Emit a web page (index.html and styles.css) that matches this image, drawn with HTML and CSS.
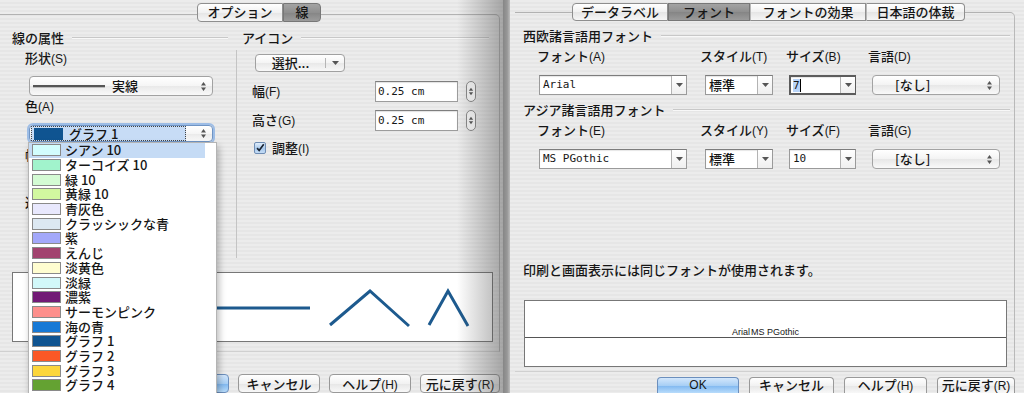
FILE: index.html
```html
<!DOCTYPE html>
<html lang="ja">
<head>
  <meta charset="UTF-8" />
  <meta name="viewport" content="width=device-width, initial-scale=1.0" />
  <title>線 / フォント</title>
  <link rel="stylesheet" href="styles.css">
</head>
<body>
  <svg class="sprite" aria-hidden="true">
    <symbol id="ud" viewBox="0 0 7 11"><path d="M1 4.5 3.5 1 6 4.5zM1 6.5 3.5 10 6 6.5z"/></symbol>
    <symbol id="dn" viewBox="0 0 7 4"><path d="M0 0h7L3.5 4z"/></symbol>
  </svg>

  <div class="screen">
    <!-- line properties dialog -->
    <section class="panel panel-line">
      <div class="frame">
        <div class="tabs">
          <span class="tab tab-opt">オプション</span><span class="tab tab-line active">線</span>
        </div>

        <div class="cols">
          <div class="col-attr">
            <div class="group-title">線の属性</div>
            <div class="label">形状<span class="key">(S)</span></div>
            <div class="popup shape-popup">
              <span class="line-sample"></span>
              <span class="popup-text">実線</span>
              <svg class="updown"><use href="#ud"/></svg>
            </div>
            <div class="label label-color">色<span class="key">(A)</span></div>
            <div class="color-field">
              <div class="popup color-popup">
                <span class="color-sel"><span class="swatch c-graph1"></span>グラフ 1</span>
                <svg class="updown"><use href="#ud"/></svg>
              </div>
              <ul class="color-list">
                <li class="hl"><span class="swatch c-cyan"></span>シアン 10</li>
                <li><span class="swatch c-turq"></span>ターコイズ 10</li>
                <li><span class="swatch c-green"></span>緑 10</li>
                <li><span class="swatch c-ygreen"></span>黄緑 10</li>
                <li><span class="swatch c-bgray"></span>青灰色</li>
                <li><span class="swatch c-classic"></span>クラッシックな青</li>
                <li><span class="swatch c-purple"></span>紫</li>
                <li><span class="swatch c-bordeaux"></span>えんじ</li>
                <li><span class="swatch c-pyellow"></span>淡黄色</li>
                <li><span class="swatch c-pgreen"></span>淡緑</li>
                <li><span class="swatch c-dpurple"></span>濃紫</li>
                <li><span class="swatch c-salmon"></span>サーモンピンク</li>
                <li><span class="swatch c-sea"></span>海の青</li>
                <li><span class="swatch c-graph1"></span>グラフ 1</li>
                <li><span class="swatch c-graph2"></span>グラフ 2</li>
                <li><span class="swatch c-graph3"></span>グラフ 3</li>
                <li><span class="swatch c-graph4"></span>グラフ 4</li>
              </ul>
            </div>
            <div class="label label-width">幅<span class="key">(W)</span></div>
            <div class="label label-trans">透過性<span class="key">(T)</span></div>
          </div>

          <div class="col-icon">
            <div class="group-title">アイコン</div>
            <div class="icon-body">
              <div class="select-btn">
                <span class="select-text">選択...</span>
                <span class="select-arrow"><svg class="dn"><use href="#dn"/></svg></span>
              </div>
              <div class="num-row">
                <span class="num-label">幅<span class="key">(F)</span></span>
                <span class="num-input">0.25 cm</span>
                <span class="stepper"><svg class="updown"><use href="#ud"/></svg></span>
              </div>
              <div class="num-row">
                <span class="num-label">高さ<span class="key">(G)</span></span>
                <span class="num-input">0.25 cm</span>
                <span class="stepper"><svg class="updown"><use href="#ud"/></svg></span>
              </div>
              <div class="check-row">
                <svg class="checkbox" viewBox="0 0 12 12">
                  <path d="M2.5 6.2 5 9 10.5 1.5" />
                </svg>
                <span>調整<span class="key">(I)</span></span>
              </div>
            </div>
          </div>
        </div>

        <div class="preview line-preview">
          <svg viewBox="0 0 479 68" width="479" height="68">
            <path d="M20 35H297M317 52 357 18 396 53M416 52 435 18 455 53" />
          </svg>
        </div>
      </div>

      <div class="buttons">
        <span class="btn btn-ok">OK</span>
        <span class="btn">キャンセル</span>
        <span class="btn">ヘルプ<span class="key">(H)</span></span>
        <span class="btn btn-revert">元に戻す<span class="key">(R)</span></span>
      </div>
    </section>

    <div class="divider"></div>

    <!-- character dialog, font tab -->
    <section class="panel panel-font">
      <div class="frame">
        <div class="tabs">
          <span class="tab tab-label">データラベル</span><span class="tab tab-font active">フォント</span><span class="tab tab-effect">フォントの効果</span><span class="tab tab-asian">日本語の体裁</span>
        </div>

        <div class="font-section">
          <div class="group-title">西欧諸言語用フォント</div>
          <div class="font-grid">
            <span>フォント<span class="key">(A)</span></span>
            <span>スタイル<span class="key">(T)</span></span>
            <span>サイズ<span class="key">(B)</span></span>
            <span>言語<span class="key">(D)</span></span>
            <span class="combo combo-name"><span class="combo-text mono">Arial</span><span class="combo-arrow"><svg class="dn"><use href="#dn"/></svg></span></span>
            <span class="combo combo-style"><span class="combo-text">標準</span><span class="combo-arrow"><svg class="dn"><use href="#dn"/></svg></span></span>
            <span class="combo combo-size focused"><span class="combo-text mono"><span class="picked">7</span><span class="caret"></span></span><span class="combo-arrow"><svg class="dn"><use href="#dn"/></svg></span></span>
            <span class="lang-popup"><span class="lang-text">[なし]</span><svg class="updown"><use href="#ud"/></svg></span>
          </div>
        </div>

        <div class="font-section">
          <div class="group-title">アジア諸言語用フォント</div>
          <div class="font-grid">
            <span>フォント<span class="key">(E)</span></span>
            <span>スタイル<span class="key">(Y)</span></span>
            <span>サイズ<span class="key">(F)</span></span>
            <span>言語<span class="key">(G)</span></span>
            <span class="combo combo-name"><span class="combo-text mono">MS PGothic</span><span class="combo-arrow"><svg class="dn"><use href="#dn"/></svg></span></span>
            <span class="combo combo-style"><span class="combo-text">標準</span><span class="combo-arrow"><svg class="dn"><use href="#dn"/></svg></span></span>
            <span class="combo combo-size"><span class="combo-text mono">10</span><span class="combo-arrow"><svg class="dn"><use href="#dn"/></svg></span></span>
            <span class="lang-popup"><span class="lang-text">[なし]</span><svg class="updown"><use href="#ud"/></svg></span>
          </div>
        </div>

        <div class="note">印刷と画面表示には同じフォントが使用されます。</div>

        <div class="preview font-preview">
          <div class="sample-line"><span>Arial</span><span>MS PGothic</span></div>
        </div>
      </div>

      <div class="buttons">
        <span class="btn btn-ok">OK</span>
        <span class="btn btn-cancel">キャンセル</span>
        <span class="btn btn-help">ヘルプ<span class="key">(H)</span></span>
        <span class="btn btn-revert">元に戻す<span class="key">(R)</span></span>
      </div>
    </section>
  </div>
</body>
</html>
```

FILE: styles.css
```css
* {
  box-sizing: border-box;
}

html,
body {
  margin: 0;
}

body {
  width: 1024px;
  height: 393px;
  overflow: hidden;
  font-family: "Noto Sans CJK JP", "Liberation Sans", sans-serif;
  font-size: 13px;
  font-weight: 500;
  line-height: 16px;
  color: #161616;
  background: #e8e8e8;
}

.sprite {
  position: absolute;
  width: 0;
  height: 0;
}

.key {
  font-family: "Liberation Sans", sans-serif;
  font-size: 12px;
  font-weight: 400;
}

.mono {
  font-family: "DejaVu Sans Mono", "Noto Sans CJK JP", monospace;
  font-size: 11px;
  font-weight: 400;
}

.screen {
  display: flex;
  height: 393px;
}

.panel {
  position: relative;
  height: 393px;
  background: repeating-linear-gradient(#ececec 0 2px, #e6e6e6 2px 4px);
}

.panel-line {
  width: 503px;
}

.panel-font {
  width: 514px;
}

/* shadow of the front window falling on the back one */
.panel-line::after {
  content: "";
  position: absolute;
  top: 0;
  right: 0;
  bottom: 0;
  width: 46px;
  background: linear-gradient(to right, rgba(70, 70, 70, 0), rgba(70, 70, 70, 0.42));
  pointer-events: none;
}

.divider {
  width: 7px;
  background: linear-gradient(to right, #868686, #979797 60%, #bdbdbd);
}

/* tab frame */
.frame {
  border-top: 1px solid #b2b2b2;
  border-right: 1px solid #b9b9b9;
  border-bottom: 1px solid #d0d0d0;
  border-top-right-radius: 5px;
}

.panel-line .frame {
  margin: 14px 3px 0 0;
  padding-bottom: 9px;
}

.panel-font .frame {
  margin: 12px 9px 0 5px;
  padding: 0 4px 4px 8px;
}

.tabs {
  display: flex;
}

.panel-line .tabs {
  height: 19px;
  margin: -12px 0 0 197px;
}

.panel-font .tabs {
  height: 18px;
  margin: -10px 0 0 49px;
}

.tab {
  height: 100%;
  line-height: 16px;
  text-align: center;
  border: 1px solid #8e8e8e;
  border-left: 1px solid #b8b8b8;
  background: linear-gradient(#ffffff, #f1f1f1 50%, #e5e5e5 51%, #f6f6f6);
}

.tab:first-child {
  border-left-color: #8e8e8e;
  border-radius: 4px 0 0 4px;
}

.tab:last-child {
  border-radius: 0 4px 4px 0;
}

.tab.active {
  background: linear-gradient(#a3a3a3, #8f8f8f 50%, #858585 51%, #9b9b9b);
  border-color: #777;
}

.tab-opt { width: 86px; }
.tab-line { width: 38px; }
.tab-label { width: 96px; }
.tab-font { width: 82px; }
.tab-effect { width: 116px; }
.tab-asian { width: 99px; }

.group-title {
  display: flex;
  align-items: center;
  height: 16px;
}

.group-title::after {
  content: "";
  flex: 1;
  margin-left: 8px;
  border-top: 1px solid #c8c8c8;
  border-bottom: 1px solid #f8f8f8;
}

/* line tab */
.cols {
  display: grid;
  grid-template-columns: 224px 1fr;
  margin: 8px 0 0 12px;
  height: 228px;
}

.col-attr {
  padding-right: 8px;
}

.label {
  height: 16px;
  padding-left: 13px;
  margin-top: 4px;
}

.label-color {
  margin-top: 2px;
}

.label-width {
  margin-top: 5px;
}

.label-trans {
  margin-top: 31px;
}

.popup {
  display: flex;
  align-items: center;
  width: 184px;
  margin-left: 17px;
  border: 1px solid #a2a2a2;
  border-radius: 4px;
  background: linear-gradient(#ffffff, #f5f5f5 50%, #e9e9e9 51%, #f9f9f9);
}

.shape-popup {
  height: 20px;
  margin-top: 10px;
}

.line-sample {
  width: 72px;
  height: 2px;
  margin: 0 0 1px 3px;
  background: #555;
  box-shadow: 0 1px 0 #bbb;
}

.popup-text {
  margin-left: 7px;
}

.updown {
  width: 7px;
  height: 11px;
  fill: #555;
}

.popup .updown {
  margin: 0 5px 0 auto;
}

.color-field {
  position: relative;
  width: 184px;
  margin: 11px 0 0 17px;
}

.color-popup {
  height: 17px;
  margin-left: 0;
  border-color: #6f94c4;
  box-shadow: 0 0 0 2px #9dbde6;
}

.color-sel {
  display: flex;
  align-items: center;
  width: 155px;
  height: 15px;
  margin-left: 1px;
  border: 1px dotted #444;
  background: #c7dcf6;
}

.color-sel .swatch {
  margin: 0 6px 0 2px;
}

.swatch {
  width: 29px;
  height: 12px;
  border: 1px solid #8a8a8a;
  flex: none;
}

.color-sel .swatch {
  border: none;
}

/* the open colour list lies over the dialog */
.color-list {
  position: absolute;
  top: 17px;
  left: -1px;
  width: 189px;
  height: 260px;
  margin: 0;
  padding: 0 11px 0 0;
  list-style: none;
  background: #fff;
  border: 1px solid #b4b4b4;
  box-shadow: 2px 4px 7px rgba(0, 0, 0, 0.28);
  z-index: 2;
}

.color-list li {
  display: flex;
  align-items: center;
  height: 14.7px;
  padding-left: 3px;
  line-height: 14px;
  white-space: nowrap;
}

.color-list li .swatch {
  margin-right: 4px;
}

.color-list li.hl {
  background: #c5dbf5;
}

.c-cyan { background: #d2fdfd; }
.c-turq { background: #a1f3cc; }
.c-green { background: #d4fbd4; }
.c-ygreen { background: #d2f8a0; }
.c-bgray { background: #e8e8fd; }
.c-classic { background: #dce8f2; }
.c-purple { background: #a3a8fa; }
.c-bordeaux { background: #a2436f; }
.c-pyellow { background: #fffdd0; }
.c-pgreen { background: #d2f8f9; }
.c-dpurple { background: #721a76; }
.c-salmon { background: #fd8f8c; }
.c-sea { background: #1679d6; }
.c-graph1 { background: #0f5491; }
.c-graph2 { background: #fb5826; }
.c-graph3 { background: #fcd63c; }
.c-graph4 { background: #64a232; }

.col-icon .group-title {
  padding: 0 10px 0 6px;
}

.icon-body {
  height: 208px;
  margin-top: 4px;
  padding-top: 4px;
  border-left: 1px solid #c4c4c4;
}

.select-btn {
  display: flex;
  width: 90px;
  height: 18px;
  margin-left: 18px;
  border: 1px solid #a0a0a0;
  border-radius: 4px;
  background: linear-gradient(#ffffff, #f4f4f4 50%, #e8e8e8 51%, #f8f8f8);
}

.select-text {
  width: 69px;
  line-height: 16px;
  text-align: center;
}

.select-arrow {
  display: flex;
  align-items: center;
  justify-content: center;
  flex: 1;
  margin: 3px 0;
  border-left: 1px solid #b5b5b5;
}

.dn {
  width: 7px;
  height: 4px;
  fill: #555;
}

.num-row {
  display: flex;
  align-items: center;
  margin-top: 9px;
  padding-left: 15px;
}

.num-row + .num-row {
  margin-top: 8px;
}

.num-label {
  width: 123px;
}

.num-input {
  width: 83px;
  height: 21px;
  padding-left: 2px;
  font-family: "DejaVu Sans Mono", monospace;
  font-size: 11px;
  font-weight: 400;
  line-height: 19px;
  background: #fff;
  border: 1px solid #9c9c9c;
  border-top-color: #7e7e7e;
  box-shadow: inset 0 1px 1px rgba(0, 0, 0, 0.12);
}

.stepper {
  display: flex;
  align-items: center;
  justify-content: center;
  width: 10px;
  height: 21px;
  margin-left: 8px;
  border: 1px solid #8a8a8a;
  border-radius: 5px;
  background: linear-gradient(to right, #f4f4f4, #ffffff);
}

.stepper .updown {
  width: 6px;
}

.check-row {
  display: flex;
  align-items: center;
  gap: 6px;
  height: 16px;
  margin-top: 9px;
  padding-left: 17px;
}

.checkbox {
  width: 12px;
  height: 12px;
  border: 1px solid #6f8db4;
  border-radius: 2px;
  background: linear-gradient(#e0eefc, #a9c9ec 55%, #c4dcf6);
  fill: none;
  stroke: #1a2330;
  stroke-width: 2;
  overflow: visible;
}

.preview {
  background: #fff;
  border: 1px solid #777;
}

.line-preview {
  width: 481px;
  height: 70px;
  margin: 14px 0 0 12px;
}

.line-preview svg {
  display: block;
  fill: none;
  stroke: #1d5a8e;
  stroke-width: 3;
}

/* buttons */
.buttons {
  display: flex;
  justify-content: flex-end;
  gap: 9px;
}

.panel-line .buttons {
  margin: 22px 3px 0 0;
}

.panel-font .buttons {
  margin: 5px 9px 0 0;
  gap: 10px;
}

.btn {
  width: 82px;
  height: 19px;
  line-height: 17px;
  text-align: center;
  border: 1px solid #999;
  border-radius: 4px;
  background: linear-gradient(#ffffff, #f2f2f2 50%, #e6e6e6 51%, #f8f8f8);
}

.panel-font .btn {
  height: 16px;
  line-height: 14px;
  border-bottom: none;
  border-radius: 4px 4px 0 0;
}

.btn-ok {
  font-family: "Liberation Sans", sans-serif;
  font-size: 12px;
  border-color: #6c8fbd;
  background: linear-gradient(#d3e7fc, #a8cff5 50%, #7fb7f0 51%, #b8dcfb);
}

.panel-line .btn-revert {
  width: 80px;
}

.btn-cancel { width: 85px; }
.btn-help { width: 83px; }
.panel-font .btn-revert { width: 78px; }

/* font tab */
.font-section .group-title {
  margin-top: 7px;
}

.font-grid {
  display: grid;
  grid-template-columns: 163px 86px 82px 1fr;
  grid-template-rows: 16px 20px;
  row-gap: 11px;
  margin: 4px 0 0 14px;
}

.combo {
  display: flex;
  height: 20px;
  background: #fff;
  border: 1px solid #9a9a9a;
  border-top-color: #7d7d7d;
  box-shadow: inset 0 1px 1px rgba(0, 0, 0, 0.1);
}

.combo-name { width: 148px; margin-left: 2px; }
.combo-style { width: 68px; margin-left: 5px; }
.combo-size { width: 67px; margin-left: 3px; }

.combo-text {
  flex: 1;
  padding-left: 3px;
  line-height: 18px;
  overflow: hidden;
  white-space: nowrap;
}

.combo-arrow {
  display: flex;
  align-items: center;
  justify-content: center;
  width: 15px;
  border-left: 1px solid #b3b3b3;
  background: linear-gradient(#ffffff, #efefef);
}

.combo.focused {
  border: 2px solid #5c5c5c;
  border-right-width: 1px;
}

.combo.focused .combo-text {
  display: flex;
  align-items: center;
  padding-left: 2px;
}

.picked {
  background: #b8d4f8;
  line-height: 13px;
}

.caret {
  width: 1px;
  height: 13px;
  background: #000;
}

.lang-popup {
  display: flex;
  align-items: center;
  width: 128px;
  height: 20px;
  margin-left: 4px;
  padding: 0 6px 0 22px;
  border: 1px solid #a3a3a3;
  border-radius: 4px;
  background: linear-gradient(#ffffff, #f3f3f3 50%, #e7e7e7 51%, #f9f9f9);
}

.lang-popup .updown {
  margin-left: auto;
}

.note {
  margin-top: 93px;
  height: 16px;
}

.font-preview {
  width: 483px;
  height: 67px;
  margin: 22px 0 0 1px;
}

.sample-line {
  display: flex;
  justify-content: center;
  align-items: flex-end;
  height: 37px;
  border-bottom: 1px solid #555;
  font-family: "Liberation Sans", sans-serif;
  font-size: 9px;
  font-weight: 400;
  line-height: 10px;
}

.sample-line span + span {
  margin-left: 1px;
}
```
